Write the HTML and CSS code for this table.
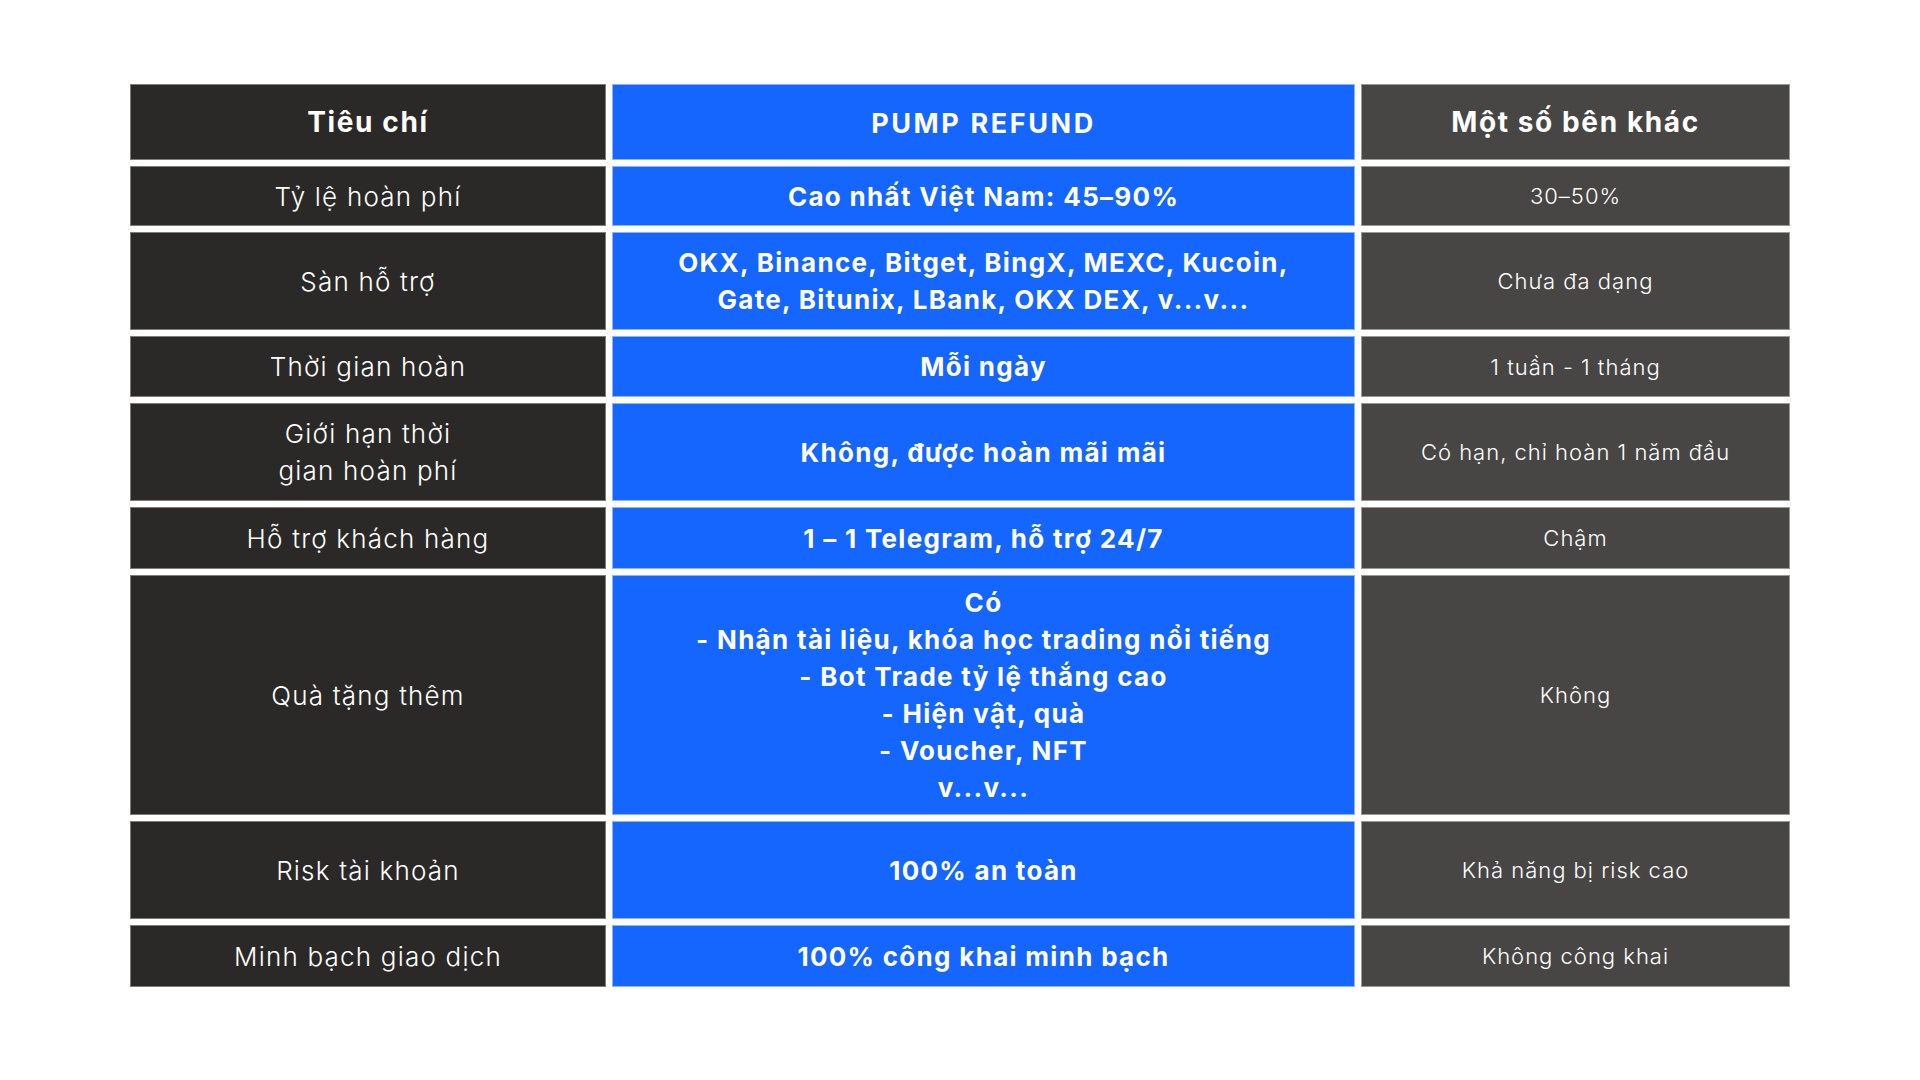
FILE: index.html
```html
<!DOCTYPE html>
<html lang="vi">
<head>
<meta charset="utf-8">
<title>So sánh PUMP REFUND</title>
<link rel="stylesheet" href="styles.css">
</head>
<body>
<main class="page">
  <div class="table">
    <div class="cell c1 head">Tiêu chí</div>
    <div class="cell c2 head">PUMP REFUND</div>
    <div class="cell c3 head">Một số bên khác</div>

    <div class="cell c1">Tỷ lệ hoàn phí</div>
    <div class="cell c2">Cao nhất Việt Nam: 45–90%</div>
    <div class="cell c3">30–50%</div>

    <div class="cell c1">Sàn hỗ trợ</div>
    <div class="cell c2">OKX, Binance, Bitget, BingX, MEXC, Kucoin,<br>Gate, Bitunix, LBank, OKX DEX, v...v...</div>
    <div class="cell c3">Chưa đa dạng</div>

    <div class="cell c1">Thời gian hoàn</div>
    <div class="cell c2">Mỗi ngày</div>
    <div class="cell c3">1 tuần - 1 tháng</div>

    <div class="cell c1">Giới hạn thời<br>gian hoàn phí</div>
    <div class="cell c2">Không, được hoàn mãi mãi</div>
    <div class="cell c3">Có hạn, chỉ hoàn 1 năm đầu</div>

    <div class="cell c1">Hỗ trợ khách hàng</div>
    <div class="cell c2">1 – 1 Telegram, hỗ trợ 24/7</div>
    <div class="cell c3">Chậm</div>

    <div class="cell c1">Quà tặng thêm</div>
    <div class="cell c2 list">Có<br>- Nhận tài liệu, khóa học trading nổi tiếng<br>- Bot Trade tỷ lệ thắng cao<br>- Hiện vật, quà<br>- Voucher, NFT<br>v...v...</div>
    <div class="cell c3">Không</div>

    <div class="cell c1">Risk tài khoản</div>
    <div class="cell c2">100% an toàn</div>
    <div class="cell c3">Khả năng bị risk cao</div>

    <div class="cell c1">Minh bạch giao dịch</div>
    <div class="cell c2">100% công khai minh bạch</div>
    <div class="cell c3">Không công khai</div>
  </div>
</main>
</body>
</html>
```
FILE: styles.css
```css
* { box-sizing: border-box; }
html, body { margin: 0; padding: 0; background: #ffffff; }
body {
  width: 1920px;
  height: 1080px;
  font-family: Inter, "Noto Sans", "DejaVu Sans", sans-serif;
}
.page {
  padding-top: 84px;
  display: flex;
  justify-content: center;
}
.table {
  display: grid;
  grid-template-columns: 476px 743px 429px;
  grid-template-rows: 76px 60px 98px 61px 98px 62px 240px 98px 62px;
  column-gap: 6px;
  row-gap: 6px;
}
.cell {
  display: flex;
  align-items: center;
  justify-content: center;
  text-align: center;
  color: #ffffff;
  border: 1px solid transparent;
}
.c1 {
  background: #2a2927;
  border-color: #7d7c7b;
  font-size: 26px;
  font-weight: 300;
  letter-spacing: 1.2px;
  line-height: 37px;
}
.c2 {
  background: #1565ff;
  border-color: #8fb4ff;
  font-size: 26px;
  font-weight: 700;
  letter-spacing: 1.3px;
  line-height: 37px;
}
.c3 {
  background: #474645;
  border-color: #9a9999;
  font-size: 22px;
  font-weight: 300;
  letter-spacing: 1px;
  line-height: 32px;
}
.head {
  font-size: 28px;
  font-weight: 700;
  letter-spacing: 1.6px;
}
.c2.head {
  font-size: 27px;
  font-weight: 700;
  letter-spacing: 2.6px;
  padding-top: 2px;
}
.list {
  line-height: 37px;
}
```
